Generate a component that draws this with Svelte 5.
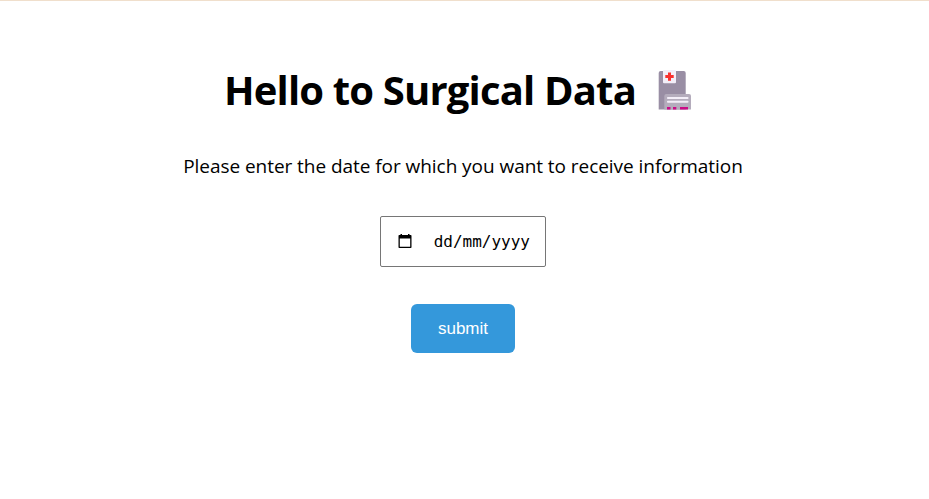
<script>
  const title = 'Hello to Surgical Data';
</script>

<main>
  <header>
    <h1>{title}</h1>
    <svg class="hospital" width="34" height="40" viewBox="0 0 34 40" aria-hidden="true">
      <path d="M.7 39.5V3Q.7 1 2.7 1H25.7Q27.7 1 27.7 3V39.5Z" fill="#998ea4" />
      <rect x="5" y="0" width="13" height="13.3" rx="1" fill="#f3eef8" />
      <path d="M10 2.5H13V5H15.7V8H13V10.7H10V8H7.3V5H10Z" fill="#f8312f" />
      <path d="M6.3 39.5V26Q6.3 24 8.3 24H31Q33 24 33 26V39.5Z" fill="#b4acbc" />
      <rect x="9" y="27" width="21.5" height="2" rx=".8" fill="#f3eef8" />
      <rect x="9" y="30.7" width="21.5" height="2" rx=".8" fill="#f3eef8" />
      <path d="M9 37h3.5v2.5H9zM15 37h3.3v2.5H15zM22 37h8v2.5h-8z" fill="#ca0b86" />
    </svg>
  </header>
  <p>Please enter the date for which you want to receive information</p>
  <div class="date" role="textbox" tabindex="0" aria-label="Date">
    <svg width="14" height="15" viewBox="0 0 14 15" aria-hidden="true">
      <path d="M2.5 0H4V1H10V0H11.5V1H12.7Q13.5 1 13.5 1.8V13.2Q13.5 14 12.7 14H1.3Q.5 14 .5 13.2V1.8Q.5 1 1.3 1H2.5ZM1.8 4.5V12.7H12.2V4.5Z" fill="#000" fill-rule="evenodd" />
    </svg>
    <span>dd/mm/yyyy</span>
  </div>
  <button type="button">submit</button>
</main>

<style>
  :global(body) { background: #fff; }
  :global(#app) { border-top: 1px solid #f0dfcc; height: 498px; overflow: hidden; }
  main {
    box-sizing: border-box;
    width: 926px;
    height: 498px;
    padding-top: 60px;
    display: flex;
    flex-direction: column;
    align-items: center;
    color: #000;
    font-family: "Open Sans", "Noto Sans", sans-serif;
  }
  header { display: flex; align-items: flex-start; height: 57px; width: 476px; }
  h1 {
    margin: 0;
    width: 433px;
    font-size: 40px;
    line-height: 57px;
    font-weight: 700;
    letter-spacing: -0.83px;
    text-indent: -1px;
    white-space: nowrap;
  }
  .hospital { flex: none; margin-top: 9px; }
  p {
    margin: 34px 0 0;
    font-size: 19px;
    line-height: 28px;
    letter-spacing: -0.05px;
    white-space: nowrap;
  }
  .date {
    box-sizing: border-box;
    width: 166px;
    height: 51px;
    margin-top: 36px;
    padding: 0 15px 0 17px;
    display: flex;
    align-items: center;
    justify-content: space-between;
    border: 1px solid #767676;
    border-radius: 2px;
    font: 16px "DejaVu Sans Mono", monospace;
  }
  button {
    width: 104px;
    height: 49px;
    margin-top: 37px;
    padding: 0;
    border: 0;
    border-radius: 6px;
    background: #3498db;
    color: #fff;
    font: 17px "Liberation Sans", Arial, sans-serif;
  }
</style>
